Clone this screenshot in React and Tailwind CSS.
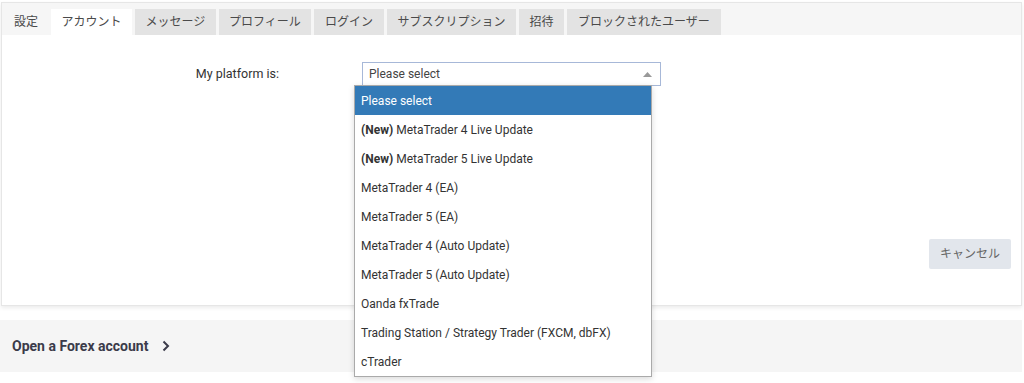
import React from 'react';

const tabs = [
  { label: '設定', w: 'w-[44px]', style: 'bg-transparent' },
  { label: 'アカウント', w: 'w-[81px]', style: 'bg-white' },
  { label: 'メッセージ', w: 'w-[81px]', style: 'bg-[#e3e3e3]' },
  { label: 'プロフィール', w: 'w-[92px]', style: 'bg-[#e3e3e3]' },
  { label: 'ログイン', w: 'w-[70px]', style: 'bg-[#e3e3e3]' },
  { label: 'サブスクリプション', w: 'w-[129px]', style: 'bg-[#e3e3e3]' },
  { label: '招待', w: 'w-[45px]', style: 'bg-[#e3e3e3]' },
  { label: 'ブロックされたユーザー', w: 'w-[154px]', style: 'bg-[#e3e3e3]' },
];

const options = [
  { text: 'Please select' },
  { bold: '(New)', text: ' MetaTrader 4 Live Update' },
  { bold: '(New)', text: ' MetaTrader 5 Live Update' },
  { text: 'MetaTrader 4 (EA)' },
  { text: 'MetaTrader 5 (EA)' },
  { text: 'MetaTrader 4 (Auto Update)' },
  { text: 'MetaTrader 5 (Auto Update)' },
  { text: 'Oanda fxTrade' },
  { text: 'Trading Station / Strategy Trader (FXCM, dbFX)' },
  { text: 'cTrader' },
];

const font = { fontFamily: 'Roboto, "Noto Sans CJK JP", sans-serif' };

export default function App() {
  return (
    <div className="relative w-[1024px] h-[383px] bg-white overflow-hidden" style={font}>
      {/* settings card */}
      <div className="ml-[1px] mr-[2px] mt-[2px] border border-[#e6e6e6] bg-white shadow-[0_2px_4px_rgba(0,0,0,0.08)]">
        <div className="flex items-end gap-[3px] h-[32px] bg-[#f6f6f6] pl-[2px]">
          {tabs.map((t, i) => (
            <div
              key={i}
              className={`${t.w} ${t.style} h-[26px] flex items-center justify-center text-[12px] text-[#4a4a4a]`}
            >
              {t.label}
            </div>
          ))}
        </div>

        <div className="pt-[27px] pb-[36px]">
          <div className="flex items-center h-[24px]">
            <div className="w-[277px] text-right text-[12.5px] text-[#333]">My platform is:</div>
            <div className="ml-[83px] w-[299px] h-[24px] border border-[#a7b8d8] bg-white flex items-center justify-between pl-[6px] pr-[8px] text-[12px] text-[#444]">
              <span>Please select</span>
              <svg width="9" height="5" viewBox="0 0 9 5">
                <path d="M0 5 L4.5 0 L9 5 Z" fill="#999" />
              </svg>
            </div>
          </div>

          <div className="flex justify-end pr-[10px] mt-[153px]">
            <button className="w-[82px] h-[30px] rounded-[2px] bg-[#e2e6ec] text-[12px] text-[#666]">
              キャンセル
            </button>
          </div>
        </div>
      </div>

      {/* forex account bar */}
      <div className="mt-[14px] mr-[2px] h-[52px] bg-[#f5f5f5] flex items-center pl-[12px] gap-[14px]">
        <span className="text-[14px] font-bold text-[#3b3b4a]">Open a Forex account</span>
        <svg width="8" height="12" viewBox="0 0 8 12">
          <path d="M1.5 1.5 L6 6 L1.5 10.5" stroke="#3b3b4a" strokeWidth="2" fill="none" />
        </svg>
      </div>

      {/* open dropdown */}
      <div className="absolute left-[354px] top-[85px] w-[298px] bg-white border border-[#aaa] shadow-[0_2px_6px_rgba(0,0,0,0.15)]">
        {options.map((o, i) => (
          <div
            key={i}
            className={`h-[29px] flex items-center pl-[6px] text-[12px] ${i === 0 ? 'bg-[#337ab7] text-white' : 'text-[#333]'}`}
          >
            {o.bold && <span className="font-bold">{o.bold}</span>}
            <span className="whitespace-pre">{o.text}</span>
          </div>
        ))}
      </div>
    </div>
  );
}
